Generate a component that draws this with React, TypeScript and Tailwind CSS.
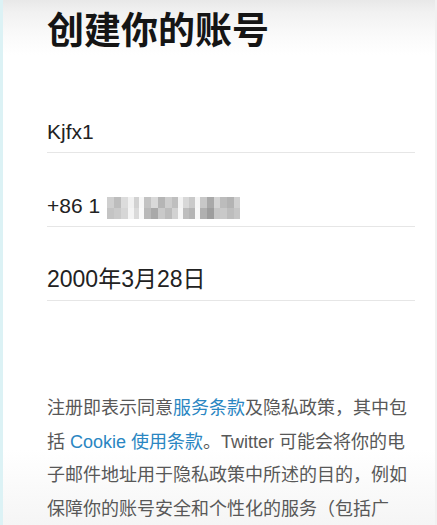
import React from "react";

const blur: [number, string, string][] = [
  [7, "#cfcfcf", "#c4c4c4"],
  [7, "#bdbdbd", "#cacaca"],
  [7, "#dcdcdc", "#d6d6d6"],
  [6, "#f1f1f1", "#f4f4f4"],
  [5, "#d2d2d2", "#dadada"],
  [5, "#f7f7f7", "#f9f9f9"],
  [7, "#c3c3c3", "#b9b9b9"],
  [7, "#d9d9d9", "#a9a9a9"],
  [7, "#b5b5b5", "#c9c9c9"],
  [7, "#cdcdcd", "#bcbcbc"],
  [6, "#bfbfbf", "#d2d2d2"],
  [5, "#f3f3f3", "#f6f6f6"],
  [6, "#d8d8d8", "#bdbdbd"],
  [6, "#c9c9c9", "#b4b4b4"],
  [5, "#f5f5f5", "#f7f7f7"],
  [7, "#c8c8c8", "#b0b0b0"],
  [7, "#a9a9a9", "#9d9d9d"],
  [6, "#d4d4d4", "#c6c6c6"],
  [7, "#bcbcbc", "#c9c9c9"],
  [7, "#b3b3b3", "#bdbdbd"],
  [6, "#d0d0d0", "#c6c6c6"],
];

export default function App() {
  const font = {
    fontFamily: '"Liberation Sans", "Noto Sans CJK SC", sans-serif',
  };
  return (
    <div
      className="h-[525px] w-[437px] overflow-hidden border-l-[3px] border-r-[2px] border-l-[#dcf2f5] border-r-[#f1f1f1] bg-[linear-gradient(to_bottom,#e8e8e8_0px,#f1f1f1_12px,#fafafa_35px,#ffffff_55px,#ffffff_450px,#f5f5f5_525px)] pl-[44px] pr-[20px]"
      style={font}
    >
      <h1
        className="mt-[10px] text-[37px] font-bold leading-none text-[#151515]"
        style={{ fontFamily: '"Noto Sans CJK SC", sans-serif' }}
      >
        创建你的账号
      </h1>

      <div className="mt-[74px] border-b border-[#e6e6e6] pb-[10px] text-[21px] leading-[21px] text-[#222]">
        Kjfx1
      </div>

      <div className="mt-[42px] flex items-end border-b border-[#e6e6e6] pb-[10px] text-[21px] leading-[21px] text-[#222]">
        <span>+86 1</span>
        <span className="mb-[-3px] ml-[7px] flex">
          {blur.map(([w, a, b], i) => (
            <span key={i} className="flex flex-col">
              <span className="h-[11px]" style={{ width: w, backgroundColor: a }} />
              <span className="h-[11px]" style={{ width: w, backgroundColor: b }} />
            </span>
          ))}
        </span>
      </div>

      <div className="mt-[41px] border-b border-[#e6e6e6] pb-[10px] text-[23px] leading-[22px] text-[#222]">
        2000年3月28日
      </div>

      <p className="mt-[91px] whitespace-nowrap text-[18px] leading-[33.5px] text-[#585858]">
        注册即表示同意<span className="text-[#2a86c2]">服务条款</span>及隐私政策，其中包
        <br />
        括 <span className="text-[#2a86c2]">Cookie 使用条款</span>。Twitter 可能会将你的电
        <br />
        子邮件地址用于隐私政策中所述的目的，例如
        <br />
        保障你的账号安全和个性化的服务（包括广
        <br />
        告）。<span className="text-[#2a86c2]">了解更多</span>。其他人将能够通过你提供的
      </p>
    </div>
  );
}
